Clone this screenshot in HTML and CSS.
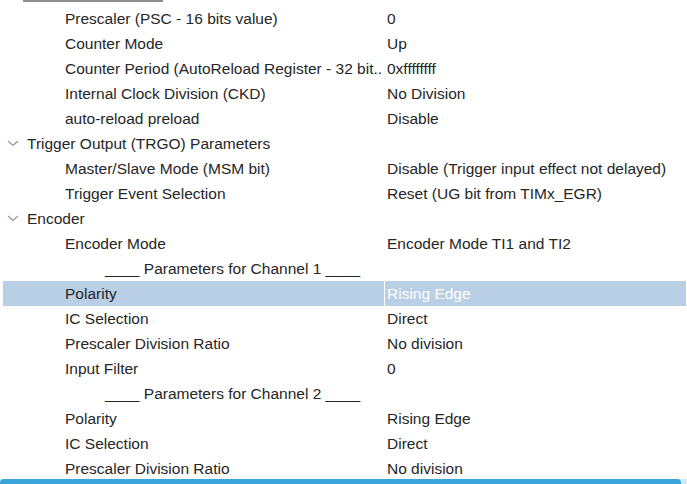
FILE: index.html
```html
<!DOCTYPE html>
<html>
<head>
<meta charset="utf-8">
<link rel="stylesheet" href="styles.css">
</head>
<body>
<div class="panel">
  <div class="topline"></div>
  <div class="tree">
    <div class="row child"><span class="label">Prescaler (PSC - 16 bits value)</span><span class="value">0</span></div>
    <div class="row child"><span class="label">Counter Mode</span><span class="value">Up</span></div>
    <div class="row child"><span class="label">Counter Period (AutoReload Register - 32 bit..</span><span class="value">0xffffffff</span></div>
    <div class="row child"><span class="label">Internal Clock Division (CKD)</span><span class="value">No Division</span></div>
    <div class="row child"><span class="label">auto-reload preload</span><span class="value">Disable</span></div>
    <div class="row group"><span class="label"><svg class="chev" width="12" height="7" viewBox="0 0 12 7"><path d="M1 1 L6 5.5 L11 1" fill="none" stroke="#9a9a9a" stroke-width="1.3"/></svg>Trigger Output (TRGO) Parameters</span></div>
    <div class="row child"><span class="label">Master/Slave Mode (MSM bit)</span><span class="value">Disable (Trigger input effect not delayed)</span></div>
    <div class="row child"><span class="label">Trigger Event Selection</span><span class="value">Reset (UG bit from TIMx_EGR)</span></div>
    <div class="row group"><span class="label"><svg class="chev" width="12" height="7" viewBox="0 0 12 7"><path d="M1 1 L6 5.5 L11 1" fill="none" stroke="#9a9a9a" stroke-width="1.3"/></svg>Encoder</span></div>
    <div class="row child"><span class="label">Encoder Mode</span><span class="value">Encoder Mode TI1 and TI2</span></div>
    <div class="row sub"><span class="label">____ Parameters for Channel 1 ____</span></div>
    <div class="row child selected"><span class="label">Polarity</span><span class="value">Rising Edge</span></div>
    <div class="row child"><span class="label">IC Selection</span><span class="value">Direct</span></div>
    <div class="row child"><span class="label">Prescaler Division Ratio</span><span class="value">No division</span></div>
    <div class="row child"><span class="label">Input Filter</span><span class="value">0</span></div>
    <div class="row sub"><span class="label">____ Parameters for Channel 2 ____</span></div>
    <div class="row child"><span class="label">Polarity</span><span class="value">Rising Edge</span></div>
    <div class="row child"><span class="label">IC Selection</span><span class="value">Direct</span></div>
    <div class="row child"><span class="label">Prescaler Division Ratio</span><span class="value">No division</span></div>
  </div>
  <div class="bottombar"><div class="bar"></div></div>
</div>
</body>
</html>
```
FILE: styles.css
```css
* { box-sizing: border-box; }
html, body { margin: 0; padding: 0; background: #fff; }
body {
  width: 687px;
  height: 484px;
  overflow: hidden;
  font-family: "Liberation Sans", Arial, sans-serif;
  font-size: 15.5px;
  color: #262626;
}
.panel {
  height: 484px;
  display: flex;
  flex-direction: column;
}
.topline {
  margin-left: 23px;
  width: 140px;
  height: 2px;
  background: #8f8f8f;
  flex: none;
}
.tree {
  padding-top: 4px;
  flex: 1;
  overflow: hidden;
}
.row {
  display: flex;
  height: 25px;
  align-items: center;
  margin-left: 3px;
  margin-right: 1px;
}
.label {
  width: 381px;
  flex: none;
  white-space: nowrap;
  display: flex;
  align-items: center;
}
.child .label { padding-left: 62px; }
.sub .label { padding-left: 102px; }
.group .label { padding-left: 4px; }
.chev { margin-right: 8px; flex: none; }
.value {
  flex: 1;
  padding-left: 3px;
  white-space: nowrap;
  height: 25px;
  line-height: 25px;
}
.selected { background: #b8cfe6; }
.selected .value { color: #fff; border-left: 1px solid #fff; padding-left: 2px; }
.bottombar {
  height: 5px;
  flex: none;
  display: flex;
  background: #d8e9f5;
}
.bar {
  width: 681px;
  height: 5px;
  background: #3aa5da;
  border-radius: 4px 4px 0 0;
}
```
